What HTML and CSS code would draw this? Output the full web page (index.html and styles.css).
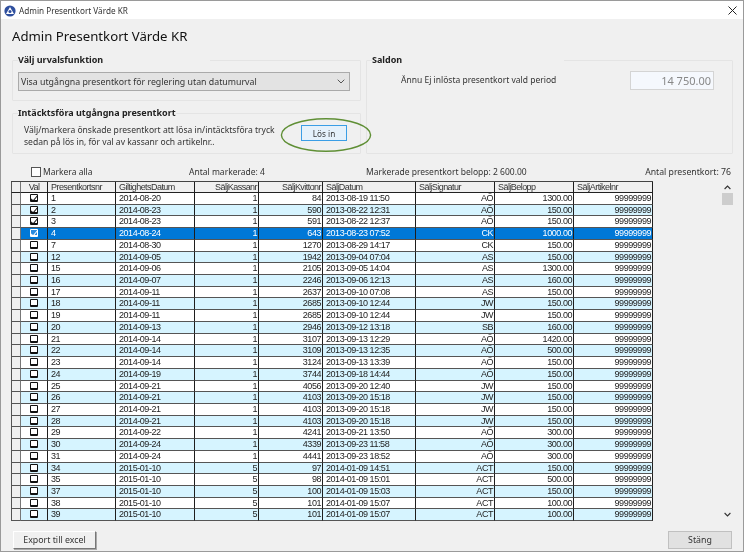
FILE: index.html
```html
<!DOCTYPE html>
<html lang="sv">
<head>
<meta charset="utf-8">
<title>Admin Presentkort Värde KR</title>
<link rel="stylesheet" href="styles.css">
</head>
<body>
<div class="window">
  <header class="titlebar">
    <svg class="appicon" width="12" height="12" viewBox="0 0 12 12"><circle cx="6" cy="6" r="5.6" fill="#2f4f9e"/><path d="M6 2 L10 9 H2 Z" fill="#fff"/><circle cx="6" cy="6.6" r="1.5" fill="#2f4f9e"/></svg>
    <span class="titlebar-text">Admin Presentkort Värde KR</span>
    <svg class="close" width="9" height="9" viewBox="0 0 9 9"><path d="M.5 .5 L8.5 8.5 M8.5 .5 L.5 8.5" stroke="#222" stroke-width="1" fill="none"/></svg>
  </header>
  <main class="content">
    <h1 class="heading">Admin Presentkort Värde KR</h1>
    <div class="panels">
      <div class="panels-left">
        <fieldset class="group group-select">
          <legend class="legend legend-wide">Välj urvalsfunktion</legend>
          <div class="select">
            <span>Visa utgångna presentkort för reglering utan datumurval</span>
            <svg width="8" height="5" viewBox="0 0 8 5"><path d="M.7 .7 L4 4 L7.3 .7" stroke="#555" stroke-width="1" fill="none"/></svg>
          </div>
        </fieldset>
        <fieldset class="group group-release">
          <legend class="legend">Intäcktsföra utgångna presentkort</legend>
          <div class="release-row">
            <p class="release-text">Välj/markera önskade presentkort att lösa in/intäcktsföra tryck<br>sedan på lös in, för val av kassanr och artikelnr..</p>
            <div class="release-action">
              <button class="btn-release" type="button">Lös in</button>
              <svg class="ring" width="92" height="36" viewBox="0 0 92 36"><ellipse cx="46" cy="18" rx="44.6" ry="16.3" fill="none" stroke="#5f8f35" stroke-width="1.4"/></svg>
            </div>
          </div>
        </fieldset>
      </div>
      <fieldset class="group group-saldon">
        <legend class="legend legend-wide">Saldon</legend>
        <div class="saldon-row">
          <span class="saldon-label">Ännu Ej inlösta presentkort vald period</span>
          <div class="amount">14 750.00</div>
        </div>
      </fieldset>
    </div>
    <div class="summary">
      <label class="check-all"><span class="box"></span>Markera alla</label>
      <span class="sum-a">Antal markerade: 4</span>
      <span class="sum-b">Markerade presentkort belopp: 2 600.00</span>
      <span class="sum-c">Antal presentkort: 76</span>
    </div>
    <div class="grid">
      <div class="table">
        <div class="row head"><span class="rh"></span><span class="c">Val</span><span>Presentkortsnr</span><span>GiltighetsDatum</span><span class="r">SäljKassanr</span><span class="r">SäljKvittonr</span><span>SäljDatum</span><span>SäljSignatur</span><span>SäljBelopp</span><span>SäljArtikelnr</span></div>
        <div class="row"><span class="rh"></span><span class="c"><b class="cb on"></b></span><span>1</span><span>2014-08-20</span><span class="r">1</span><span class="r">84</span><span>2013-08-19 11:50</span><span class="r">AÖ</span><span class="r">1300.00</span><span class="r">99999999</span></div>
        <div class="row alt"><span class="rh"></span><span class="c"><b class="cb on"></b></span><span>2</span><span>2014-08-23</span><span class="r">1</span><span class="r">590</span><span>2013-08-22 12:31</span><span class="r">AÖ</span><span class="r">150.00</span><span class="r">99999999</span></div>
        <div class="row"><span class="rh"></span><span class="c"><b class="cb on"></b></span><span>3</span><span>2014-08-23</span><span class="r">1</span><span class="r">591</span><span>2013-08-22 12:37</span><span class="r">AÖ</span><span class="r">150.00</span><span class="r">99999999</span></div>
        <div class="row sel"><span class="rh"></span><span class="c"><b class="cb on"></b></span><span>4</span><span>2014-08-24</span><span class="r">1</span><span class="r">643</span><span>2013-08-23 07:52</span><span class="r">CK</span><span class="r">1000.00</span><span class="r">99999999</span></div>
        <div class="row"><span class="rh"></span><span class="c"><b class="cb"></b></span><span>7</span><span>2014-08-30</span><span class="r">1</span><span class="r">1270</span><span>2013-08-29 14:17</span><span class="r">CK</span><span class="r">150.00</span><span class="r">99999999</span></div>
        <div class="row alt"><span class="rh"></span><span class="c"><b class="cb"></b></span><span>12</span><span>2014-09-05</span><span class="r">1</span><span class="r">1942</span><span>2013-09-04 07:04</span><span class="r">AS</span><span class="r">150.00</span><span class="r">99999999</span></div>
        <div class="row"><span class="rh"></span><span class="c"><b class="cb"></b></span><span>15</span><span>2014-09-06</span><span class="r">1</span><span class="r">2105</span><span>2013-09-05 14:04</span><span class="r">AS</span><span class="r">1300.00</span><span class="r">99999999</span></div>
        <div class="row alt"><span class="rh"></span><span class="c"><b class="cb"></b></span><span>16</span><span>2014-09-07</span><span class="r">1</span><span class="r">2246</span><span>2013-09-06 12:13</span><span class="r">AS</span><span class="r">160.00</span><span class="r">99999999</span></div>
        <div class="row"><span class="rh"></span><span class="c"><b class="cb"></b></span><span>17</span><span>2014-09-11</span><span class="r">1</span><span class="r">2637</span><span>2013-09-10 07:08</span><span class="r">AS</span><span class="r">150.00</span><span class="r">99999999</span></div>
        <div class="row alt"><span class="rh"></span><span class="c"><b class="cb"></b></span><span>18</span><span>2014-09-11</span><span class="r">1</span><span class="r">2685</span><span>2013-09-10 12:44</span><span class="r">JW</span><span class="r">150.00</span><span class="r">99999999</span></div>
        <div class="row"><span class="rh"></span><span class="c"><b class="cb"></b></span><span>19</span><span>2014-09-11</span><span class="r">1</span><span class="r">2685</span><span>2013-09-10 12:44</span><span class="r">JW</span><span class="r">150.00</span><span class="r">99999999</span></div>
        <div class="row alt"><span class="rh"></span><span class="c"><b class="cb"></b></span><span>20</span><span>2014-09-13</span><span class="r">1</span><span class="r">2946</span><span>2013-09-12 13:18</span><span class="r">SB</span><span class="r">160.00</span><span class="r">99999999</span></div>
        <div class="row"><span class="rh"></span><span class="c"><b class="cb"></b></span><span>21</span><span>2014-09-14</span><span class="r">1</span><span class="r">3107</span><span>2013-09-13 12:29</span><span class="r">AÖ</span><span class="r">1420.00</span><span class="r">99999999</span></div>
        <div class="row alt"><span class="rh"></span><span class="c"><b class="cb"></b></span><span>22</span><span>2014-09-14</span><span class="r">1</span><span class="r">3109</span><span>2013-09-13 12:35</span><span class="r">AÖ</span><span class="r">500.00</span><span class="r">99999999</span></div>
        <div class="row"><span class="rh"></span><span class="c"><b class="cb"></b></span><span>23</span><span>2014-09-14</span><span class="r">1</span><span class="r">3124</span><span>2013-09-13 13:39</span><span class="r">AÖ</span><span class="r">150.00</span><span class="r">99999999</span></div>
        <div class="row alt"><span class="rh"></span><span class="c"><b class="cb"></b></span><span>24</span><span>2014-09-19</span><span class="r">1</span><span class="r">3744</span><span>2013-09-18 14:44</span><span class="r">AÖ</span><span class="r">150.00</span><span class="r">99999999</span></div>
        <div class="row"><span class="rh"></span><span class="c"><b class="cb"></b></span><span>25</span><span>2014-09-21</span><span class="r">1</span><span class="r">4056</span><span>2013-09-20 12:40</span><span class="r">JW</span><span class="r">150.00</span><span class="r">99999999</span></div>
        <div class="row alt"><span class="rh"></span><span class="c"><b class="cb"></b></span><span>26</span><span>2014-09-21</span><span class="r">1</span><span class="r">4103</span><span>2013-09-20 15:18</span><span class="r">JW</span><span class="r">150.00</span><span class="r">99999999</span></div>
        <div class="row"><span class="rh"></span><span class="c"><b class="cb"></b></span><span>27</span><span>2014-09-21</span><span class="r">1</span><span class="r">4103</span><span>2013-09-20 15:18</span><span class="r">JW</span><span class="r">150.00</span><span class="r">99999999</span></div>
        <div class="row alt"><span class="rh"></span><span class="c"><b class="cb"></b></span><span>28</span><span>2014-09-21</span><span class="r">1</span><span class="r">4103</span><span>2013-09-20 15:18</span><span class="r">JW</span><span class="r">150.00</span><span class="r">99999999</span></div>
        <div class="row"><span class="rh"></span><span class="c"><b class="cb"></b></span><span>29</span><span>2014-09-22</span><span class="r">1</span><span class="r">4241</span><span>2013-09-21 13:50</span><span class="r">AÖ</span><span class="r">300.00</span><span class="r">99999999</span></div>
        <div class="row alt"><span class="rh"></span><span class="c"><b class="cb"></b></span><span>30</span><span>2014-09-24</span><span class="r">1</span><span class="r">4339</span><span>2013-09-23 11:58</span><span class="r">AÖ</span><span class="r">300.00</span><span class="r">99999999</span></div>
        <div class="row"><span class="rh"></span><span class="c"><b class="cb"></b></span><span>31</span><span>2014-09-24</span><span class="r">1</span><span class="r">4441</span><span>2013-09-23 18:52</span><span class="r">AÖ</span><span class="r">300.00</span><span class="r">99999999</span></div>
        <div class="row alt"><span class="rh"></span><span class="c"><b class="cb"></b></span><span>34</span><span>2015-01-10</span><span class="r">5</span><span class="r">97</span><span>2014-01-09 14:51</span><span class="r">ACT</span><span class="r">150.00</span><span class="r">99999999</span></div>
        <div class="row"><span class="rh"></span><span class="c"><b class="cb"></b></span><span>35</span><span>2015-01-10</span><span class="r">5</span><span class="r">98</span><span>2014-01-09 15:01</span><span class="r">ACT</span><span class="r">500.00</span><span class="r">99999999</span></div>
        <div class="row alt"><span class="rh"></span><span class="c"><b class="cb"></b></span><span>37</span><span>2015-01-10</span><span class="r">5</span><span class="r">100</span><span>2014-01-09 15:03</span><span class="r">ACT</span><span class="r">150.00</span><span class="r">99999999</span></div>
        <div class="row"><span class="rh"></span><span class="c"><b class="cb"></b></span><span>38</span><span>2015-01-10</span><span class="r">5</span><span class="r">101</span><span>2014-01-09 15:07</span><span class="r">ACT</span><span class="r">100.00</span><span class="r">99999999</span></div>
        <div class="row alt"><span class="rh"></span><span class="c"><b class="cb"></b></span><span>39</span><span>2015-01-10</span><span class="r">5</span><span class="r">101</span><span>2014-01-09 15:07</span><span class="r">ACT</span><span class="r">100.00</span><span class="r">99999999</span></div>
      </div>
      <div class="scrollbar">
        <svg width="7" height="5" viewBox="0 0 7 5"><path d="M.6 4 L3.5 1 L6.4 4" stroke="#333" stroke-width="1.1" fill="none"/></svg>
        <div class="thumb"></div>
        <svg class="down" width="7" height="5" viewBox="0 0 7 5"><path d="M.6 1 L3.5 4 L6.4 1" stroke="#333" stroke-width="1.1" fill="none"/></svg>
      </div>
    </div>
    <footer class="actions">
      <button class="btn-export" type="button">Export till excel</button>
      <button class="btn-close" type="button">Stäng</button>
    </footer>
  </main>
</div>
</body>
</html>
```
FILE: styles.css
```css
* { box-sizing: border-box; }
html, body { margin: 0; height: 100%; background: #fff; }
body { font-family: "Noto Sans", "Open Sans", sans-serif; color: #222; overflow: hidden; }

.window {
  width: 744px; height: 553px;
  padding: 0 0 1px 0;
  background: #fff;
  display: flex; flex-direction: column;
  filter: blur(0.4px);
}
.titlebar {
  height: 19px; flex: none;
  display: flex; align-items: center;
  padding: 1px 8px 0 3px;
  background: #fff;
  border: 1px solid #9a9a9a; border-bottom: 0;
}
.appicon { flex: none; }
.titlebar-text { margin-left: 3px; font-size: 8.2px; color: #333; }
.close { margin-left: auto; margin-right: -2px; }

.content {
  flex: 1; min-height: 0;
  background: #f0f0f0;
  border: 1px solid #9a9a9a; border-top: 0;
  padding: 0 10px 0 11px;
  display: flex; flex-direction: column;
}
.heading { margin: 5px 0 0 0; height: 30px; font-size: 13.2px; line-height: 24px; font-weight: 400; color: #111; }

.panels { display: flex; gap: 5px; height: 100px; flex: none; }
.panels-left { width: 349px; flex: none; display: flex; flex-direction: column; gap: 6px; }
.group { margin: 0; min-width: 0; padding: 0 5px; border: 1px solid #e4e4e4; border-radius: 1px; }
.legend { padding: 0; font-size: 9px; line-height: 12px; font-weight: 700; color: #222; }
.legend-wide { width: 192px; }
.group-select { height: 47px; }
.group-release { height: 47px; }
.group-saldon { flex: 1; padding-right: 18px; }

.select {
  height: 19px; margin-top: 6px; width: 332px;
  display: flex; align-items: center; justify-content: space-between;
  padding: 0 4px 0 2px;
  background: #e3e3e3; border: 1px solid #aaa;
  font-size: 8.8px; color: #333;
}
.release-row { display: flex; align-items: flex-start; margin-top: 5px; padding-left: 6px; }
.release-text { margin: 0; width: 265px; font-size: 8.55px; line-height: 12px; color: #333; white-space: nowrap; }
.release-action { position: relative; padding-left: 12px; }
.btn-release {
  display: block; width: 46px; height: 16px; margin-top: 1px; padding: 0;
  background: #e5f1fb; border: 1px solid #3a9ee6;
  font: 8.2px "Noto Sans", sans-serif; color: #333;
}
.ring { position: absolute; left: -9px; top: -7px; pointer-events: none; }

.saldon-row { display: flex; justify-content: space-between; align-items: flex-start; margin-top: 5px; padding-left: 29px; }
.saldon-label { font-size: 8.5px; line-height: 12px; margin-top: 3px; color: #333; }
.amount {
  width: 84px; height: 19px;
  border: 1px solid #d4d4d4;
  background: #f5f8fd;
  font-size: 11px; line-height: 17px; text-align: right; padding-right: 2px; color: #888;
}

.summary { flex: none; height: 27px; padding-top: 12px; font-size: 8.5px; line-height: 12px; color: #333; display: flex; }
.check-all { display: flex; align-items: center; height: 12px; width: 177px; padding-left: 19px; flex: none; }
.box { width: 10px; height: 10px; margin-right: 2px; border: 1px solid #555; background: #fff; flex: none; }
.sum-a { width: 177px; flex: none; }
.sum-b { flex: none; }
.sum-c { margin-left: auto; margin-right: 2px; font-size: 8.7px; }

.grid { height: 341px; flex: none; display: flex; justify-content: space-between; margin-left: -1px; background: #f0f0f0; }
.table { width: 642px; flex: none; border-top: 1px solid #444; }
.row {
  display: grid;
  grid-template-columns: 10px 27px 68px 79px 64px 64px 93px 79px 79px 79px;
  height: 11.72px;
  background: #fff;
  font-family: "Liberation Sans", Arial, sans-serif;
  font-size: 9px; letter-spacing: -0.45px; line-height: 10px; color: #222;
}
.row > span {
  border-right: 1px solid #1e1e1e;
  border-bottom: 1px solid #555;
  padding: 0 0 0 3px;
  overflow: hidden; white-space: nowrap;
}
.row > .r { text-align: right; padding: 0 1px 0 0; }
.row > .c { text-align: center; padding: 0; }
.row > .rh { background: #f0f0f0; border-left: 1px solid #555; border-right: 1px solid #777; padding: 0; }
.head { height: 11px; background: #f0f0f0; color: #333; letter-spacing: -0.55px; }
.head > span { border-bottom-color: #222; }
.alt { background: #d6f4ff; }
.sel { background: #0078d7; color: #fff; }
.cb {
  display: inline-block; width: 8px; height: 8px; margin-top: 1px;
  border: 1px solid #111; border-bottom-width: 2px; border-radius: 1px;
  background: #fff; vertical-align: top;
  position: relative;
}
.cb.on::after {
  content: ""; position: absolute; left: 1px; top: -1px;
  width: 3px; height: 6px;
  border: solid #111; border-width: 0 1.3px 1.3px 0;
  transform: rotate(40deg);
}
.sel .cb { border-color: #fff; background: #2a8be0; }
.sel .cb.on::after { border-color: #fff; }

.scrollbar { width: 12px; height: 340px; display: flex; flex-direction: column; align-items: center; padding-top: 4px; background: #f0f0f0; }
.thumb { width: 11px; height: 12px; margin-top: 3px; background: #cdcdcd; }
.down { margin-top: auto; margin-bottom: 4px; }

.actions { flex: 1; display: flex; justify-content: space-between; align-items: flex-start; padding-top: 9px; }
.btn-export, .btn-close { height: 18px; padding: 0; font: 8.8px "Noto Sans", sans-serif; color: #333; }
.btn-export { width: 83px; margin-left: 1px; background: #f0f0f0; border: 1px solid; border-color: #fff #777 #777 #fff; box-shadow: 1px 1px 0 #aaa; }
.btn-close { width: 64px; margin-right: 1px; background: #e1e1e1; border: 1px solid #c0c0c0; }
```
